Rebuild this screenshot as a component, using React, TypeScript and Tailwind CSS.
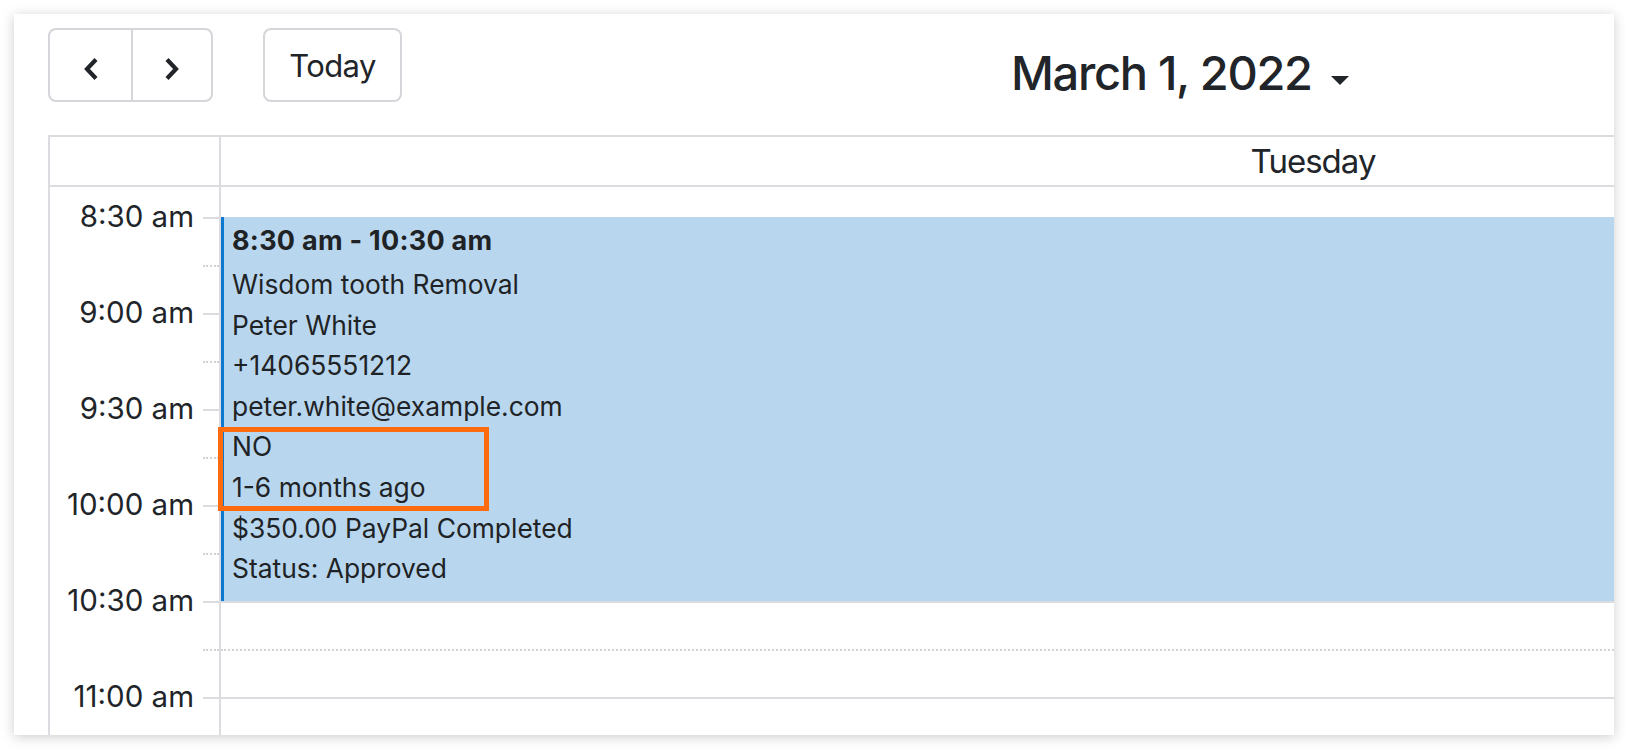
import React from "react";

type Slot = { label?: string; dotted: boolean };

const slots: Slot[] = [
  { dotted: true },
  { label: "8:30 am", dotted: false },
  { dotted: true },
  { label: "9:00 am", dotted: false },
  { dotted: true },
  { label: "9:30 am", dotted: false },
  { dotted: true },
  { label: "10:00 am", dotted: false },
  { dotted: true },
  { label: "10:30 am", dotted: false },
  { dotted: true },
  { label: "11:00 am", dotted: false },
  { dotted: true },
  { dotted: false },
];

const lines = [
  "Wisdom tooth Removal",
  "Peter White",
  "+14065551212",
  "peter.white@example.com",
  "NO",
  "1-6 months ago",
  "$350.00 PayPal Completed",
  "Status: Approved",
];

function ChevronLeft() {
  return (
    <svg width="16" height="24" viewBox="0 0 16 24" fill="none">
      <polyline points="13,2.5 4,12 13,21.5" stroke="#212529" strokeWidth="4.2" strokeLinejoin="miter" />
    </svg>
  );
}

function ChevronRight() {
  return (
    <svg width="16" height="24" viewBox="0 0 16 24" fill="none">
      <polyline points="3,2.5 12,12 3,21.5" stroke="#212529" strokeWidth="4.2" strokeLinejoin="miter" />
    </svg>
  );
}

export default function App() {
  return (
    <div className="h-[750px] w-full bg-white pt-[14px] pl-[14px] font-['Inter',sans-serif] text-[#212529]">
      <div className="w-[1600px] h-[721px] bg-white overflow-hidden shadow-[0_2px_12px_rgba(0,0,0,0.2)] pt-[14px] pl-[34px]">
        {/* Toolbar */}
        <div className="flex items-start h-[74px]">
          <div className="flex h-[74px] border-2 border-[#d5d6da] rounded-[8px]">
            <button className="w-[81px] h-full flex items-center justify-center pt-[8px]">
              <ChevronLeft />
            </button>
            <button className="w-[80px] h-full flex items-center justify-center border-l-2 border-[#d5d6da] pt-[8px]">
              <ChevronRight />
            </button>
          </div>
          <button className="ml-[50px] w-[139px] h-[74px] border-2 border-[#d5d6da] rounded-[8px] flex items-center justify-center text-[31px] tracking-[-0.02em] leading-none">
            Today
          </button>
          <div className="ml-[609px] mt-[21px] flex items-start">
            <h2 className="text-[47px] leading-[48px] tracking-[-0.028em] font-medium">March 1, 2022</h2>
            <svg className="ml-[19px] mt-[27px]" width="18" height="9" viewBox="0 0 18 9">
              <polygon points="0,0 18,0 9,9" fill="#212529" />
            </svg>
          </div>
        </div>

        {/* Calendar table */}
        <div className="mt-[33px] w-[2400px] border-l-2 border-t-2 border-[#dcdce0]">
          {/* Header */}
          <div className="flex h-[50px] border-b-2 border-[#dcdce0]">
            <div className="w-[171px] shrink-0 border-r-2 border-[#dcdce0]" />
            <div className="w-[2184px] shrink-0 flex items-center justify-center text-[33px] tracking-[-0.03em] leading-none">
              Tuesday
            </div>
          </div>

          {/* Body */}
          <div className="relative h-[548px] overflow-hidden">
            <div className="-mt-[18px]">
              {slots.map((s, i) => (
                <div key={i} className="flex h-[48px]">
                  <div className="w-[171px] shrink-0 flex border-r-2 border-[#dcdce0]">
                    <div className="flex-1 flex justify-end pr-[9px]">
                      {s.label && (
                        <div className="h-0 flex items-center">
                          <span className="text-[29.5px] leading-none whitespace-nowrap">{s.label}</span>
                        </div>
                      )}
                    </div>
                    <div
                      className={
                        s.dotted
                          ? "w-[16px] border-t-2 border-dotted border-[#d2d2d6]"
                          : "w-[16px] border-t-2 border-solid border-[#dcdce0]"
                      }
                    />
                  </div>
                  <div
                    className={
                      s.dotted
                        ? "w-[2184px] shrink-0 border-t-2 border-dotted border-[#d2d2d6]"
                        : "w-[2184px] shrink-0 border-t-2 border-solid border-[#dcdce0]"
                    }
                  />
                </div>
              ))}
            </div>

            {/* Event */}
            <div className="absolute top-[30px] left-[171px] w-[2180px] h-[384px] bg-[#b8d7ee] border-l-[3px] border-[#0b79d0] pl-[8px] pt-[4px] text-[26.4px] leading-[40.6px] text-[#1f2326]">
              <div className="font-bold text-[27px] tracking-[0.01em] mb-[2.5px] whitespace-nowrap">8:30 am - 10:30 am</div>
              {lines.map((l) => (
                <div key={l} className="whitespace-nowrap">{l}</div>
              ))}
              <div className="absolute left-[-6px] top-[210px] w-[271px] h-[84px] border-[5px] border-[#fe6a0e]" />
            </div>
          </div>
        </div>
      </div>
    </div>
  );
}
